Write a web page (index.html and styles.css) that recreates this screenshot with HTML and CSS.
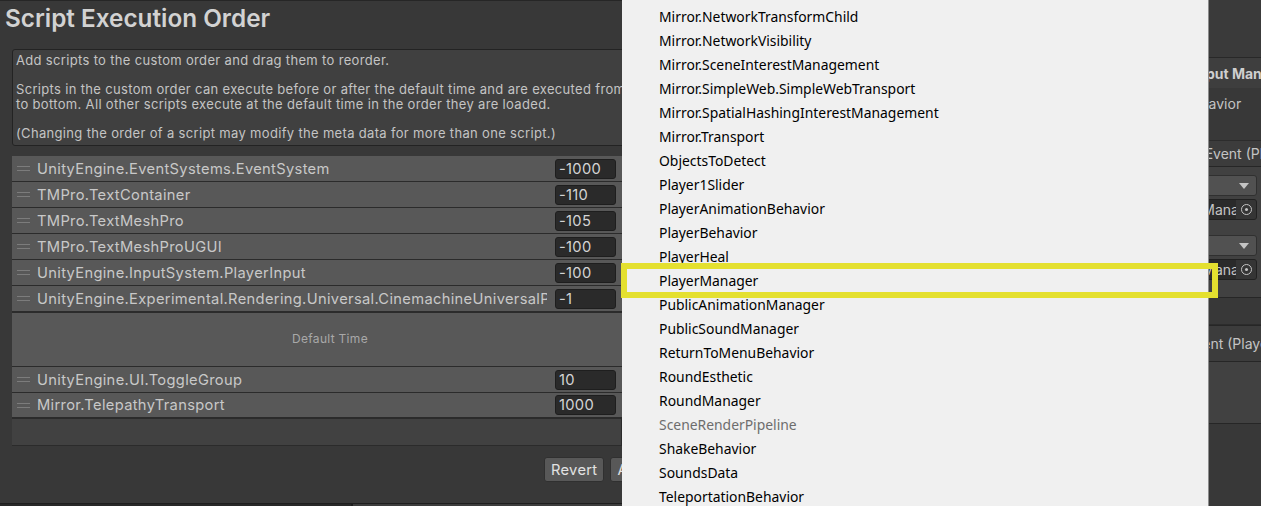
FILE: index.html
```html
<!DOCTYPE html>
<html>
<head>
<meta charset="utf-8">
<link rel="stylesheet" href="styles.css">
</head>
<body>
<div class="app">
  <div class="editor">
    <div class="editor-main">
      <h1 class="title">Script Execution Order</h1>
      <div class="help">
        <div class="hl">Add scripts to the custom order and drag them to reorder.</div>
        <div class="hl">&nbsp;</div>
        <div class="hl">Scripts in the custom order can execute before or after the default time and are executed from</div>
        <div class="hl">to bottom. All other scripts execute at the default time in the order they are loaded.</div>
        <div class="hl">&nbsp;</div>
        <div class="hl">(Changing the order of a script may modify the meta data for more than one script.)</div>
      </div>
      <div class="list">
        <div class="row"><span class="handle"></span><span class="name">UnityEngine.EventSystems.EventSystem</span><span class="num">-1000</span></div>
        <div class="row"><span class="handle"></span><span class="name">TMPro.TextContainer</span><span class="num">-110</span></div>
        <div class="row"><span class="handle"></span><span class="name">TMPro.TextMeshPro</span><span class="num">-105</span></div>
        <div class="row"><span class="handle"></span><span class="name">TMPro.TextMeshProUGUI</span><span class="num">-100</span></div>
        <div class="row"><span class="handle"></span><span class="name">UnityEngine.InputSystem.PlayerInput</span><span class="num">-100</span></div>
        <div class="row"><span class="handle"></span><span class="name">UnityEngine.Experimental.Rendering.Universal.CinemachineUniversalPixelPerfect</span><span class="num">-1</span></div>
        <div class="default">Default Time</div>
        <div class="row"><span class="handle"></span><span class="name">UnityEngine.UI.ToggleGroup</span><span class="num">10</span></div>
        <div class="row last"><span class="handle"></span><span class="name">Mirror.TelepathyTransport</span><span class="num">1000</span></div>
        <div class="list-foot"></div>
      </div>
      <div class="actions">
        <button class="btn">Revert</button>
        <button class="btn">Apply</button>
      </div>
    </div>
    <div class="dock-strip"><span class="dock-a"></span><span class="dock-b"></span></div>
  </div>

  <div class="inspector">
    <div class="i-toolbar"></div>
    <div class="i-header"><span class="i-title">Player Input Manager</span></div>
    <div class="i-prop"><span class="i-label">Join Behavior</span></div>
    <div class="i-space"></div>
    <div class="ev-head"><span class="ev-label ev1">Player Joined Event (PlayerInput)</span></div>
    <div class="ev-box">
      <div class="ev-line"><span class="dropdown"><span class="dd-text">Runtime Only</span><span class="caret"></span></span></div>
      <div class="ev-line"><span class="objfield"><span class="of-text">PlayerManager (PlayerManager)</span><span class="picker"><span class="pick-ring"></span></span></span></div>
      <div class="ev-line sep"><span class="dropdown"><span class="dd-text">Runtime Only</span><span class="caret"></span></span></div>
      <div class="ev-line"><span class="objfield"><span class="of-text">PlayerManager (PlayerManager)</span><span class="picker"><span class="pick-ring"></span></span></span></div>
    </div>
    <div class="ev-foot"></div>
    <div class="ev-head two"><span class="ev-label ev2">Player Left Event (PlayerInput)</span></div>
    <div class="ev-box empty"></div>
    <div class="i-rest"></div>
  </div>

  <div class="menu">
    <div class="mi">Mirror.NetworkTransformChild</div>
    <div class="mi">Mirror.NetworkVisibility</div>
    <div class="mi">Mirror.SceneInterestManagement</div>
    <div class="mi">Mirror.SimpleWeb.SimpleWebTransport</div>
    <div class="mi">Mirror.SpatialHashingInterestManagement</div>
    <div class="mi">Mirror.Transport</div>
    <div class="mi">ObjectsToDetect</div>
    <div class="mi">Player1Slider</div>
    <div class="mi">PlayerAnimationBehavior</div>
    <div class="mi">PlayerBehavior</div>
    <div class="mi">PlayerHeal</div>
    <div class="mi">PlayerManager</div>
    <div class="mi">PublicAnimationManager</div>
    <div class="mi">PublicSoundManager</div>
    <div class="mi">ReturnToMenuBehavior</div>
    <div class="mi">RoundEsthetic</div>
    <div class="mi">RoundManager</div>
    <div class="mi disabled">SceneRenderPipeline</div>
    <div class="mi">ShakeBehavior</div>
    <div class="mi">SoundsData</div>
    <div class="mi">TeleportationBehavior</div>
    <div class="mi">TextureScroller</div>
  </div>
  <div class="mark"></div>
</div>
</body>
</html>
```

FILE: styles.css
```css
* { box-sizing: border-box; }
html, body { margin: 0; padding: 0; }
body {
  width: 1261px;
  height: 506px;
  overflow: hidden;
  background: #383838;
  font-family: Inter, "Liberation Sans", sans-serif;
}
.app {
  position: relative;
  display: flex;
  width: 1261px;
  height: 506px;
  overflow: hidden;
}

/* ---------- editor window ---------- */
.editor {
  flex: 0 0 680px;
  width: 680px;
  min-width: 0;
  overflow: hidden;
  display: flex;
  flex-direction: column;
  background: #383838;
  border-top: 1px solid #262626;
}
.editor-main {
  flex: 1;
  min-height: 0;
  display: flex;
  flex-direction: column;
  overflow: hidden;
}
.title {
  margin: 3px 0 0 5px;
  height: 30px;
  font-size: 24.3px;
  line-height: 28px;
  font-weight: 600;
  color: #d2d2d2;
}
.help {
  margin: 15px 40px 0 12px;
  height: 97px;
  padding: 3px 3px 0 3px;
  background: #404040;
  border: 1px solid #232323;
  border-radius: 3px;
  color: #c4c4c4;
  font-size: 13px;
  white-space: nowrap;
  overflow: hidden;
}
.hl { height: 14.6px; line-height: 14.6px; letter-spacing: 0.33px; }

.list {
  margin: 10px 58px 0 12px;
  display: flex;
  flex-direction: column;
}
.row {
  display: flex;
  align-items: center;
  height: 26px;
  background: #585858;
  border-bottom: 1px solid #2b2b2b;
  padding-right: 6px;
}
.row.last { border-bottom: 2px solid #2b2b2b; }
.handle {
  flex: 0 0 13px;
  height: 5px;
  margin: 0 7px 0 5px;
  border-top: 1px solid #7c7c7c;
  border-bottom: 1px solid #7c7c7c;
}
.name {
  flex: 1;
  min-width: 0;
  overflow: hidden;
  white-space: nowrap;
  color: #c8c8c8;
  font-size: 14.7px;
  letter-spacing: 0.33px;
  margin-right: 8px;
}
.num {
  flex: 0 0 61px;
  height: 20px;
  line-height: 18px;
  padding-left: 3px;
  background: #2a2a2a;
  border: 1px solid #1e1e1e;
  border-radius: 3px;
  color: #d4d4d4;
  font-size: 14.7px;
  letter-spacing: 0.3px;
}
.default {
  height: 55px;
  line-height: 52px;
  border-top: 1px solid #2b2b2b;
  border-bottom: 1px solid #2b2b2b;
  background: #585858;
  text-align: center;
  color: #a8a8a8;
  font-size: 12px;
  letter-spacing: 0.3px;
  padding-left: 26px;
}
.list-foot {
  height: 27px;
  background: #414141;
  border-right: 1px solid #2b2b2b;
  border-bottom: 1px solid #2b2b2b;
}
.actions {
  display: flex;
  gap: 6px;
  margin: 11px 0 0 544px;
}
.btn {
  height: 25px;
  padding: 0 6px;
  background: #585858;
  border: 1px solid #303030;
  border-radius: 3px;
  color: #e2e2e2;
  font-family: Inter, "Liberation Sans", sans-serif;
  font-size: 14.7px;
  letter-spacing: 0.3px;
  line-height: 22px;
}
.dock-strip {
  flex: 0 0 3px;
  display: flex;
  border-top: 1px solid #1e1e1e;
}
.dock-a { flex: 0 0 353px; background: #282828; border-right: 2px solid #1e1e1e; }
.dock-b { flex: 1; background: #3c3c3c; }

/* ---------- inspector behind the menu ---------- */
.inspector {
  flex: 1;
  min-width: 0;
  display: flex;
  flex-direction: column;
  background: #383838;
  color: #c4c4c4;
  font-size: 14px;
  white-space: nowrap;
  overflow: hidden;
}
.i-toolbar { flex: 0 0 58px; background: #3a3a3a; border-bottom: 1px solid #282828; }
.i-header {
  flex: 0 0 30px;
  display: flex;
  align-items: center;
  background: #3e3e3e;
  padding-left: 467px;
}
.i-title { font-weight: 700; color: #cfcfcf; }
.i-prop {
  flex: 0 0 30px;
  display: flex;
  align-items: center;
  padding-left: 471px;
}
.i-space { flex: 0 0 23px; border-bottom: 1px solid #2c2c2c; }
.ev-head {
  flex: 0 0 26px;
  display: flex;
  align-items: center;
  background: #3c3c3c;
  border-bottom: 1px solid #262626;
}
.ev1 { padding-left: 431px; }
.ev-head.two { flex: 0 0 37px; border-top: 1px solid #262626; }
.ev2 { padding-left: 432px; }
.ev-box {
  flex: 0 0 131px;
  background: #414141;
  display: flex;
  flex-direction: column;
  padding-top: 8px;
  border-bottom: 1px solid #262626;
}
.ev-box.empty { flex: 0 0 62px; }
.ev-line {
  display: flex;
  justify-content: flex-end;
  padding-right: 4px;
  margin-bottom: 3px;
}
.ev-line.sep { margin-top: 12px; }
.dropdown {
  display: flex;
  align-items: center;
  justify-content: space-between;
  width: 140px;
  height: 21px;
  padding: 0 7px 0 6px;
  background: #515151;
  border: 1px solid #303030;
  border-radius: 3px;
  color: #c4c4c4;
  font-size: 13px;
}
.dd-text { overflow: hidden; }
.caret {
  width: 0; height: 0;
  border-left: 5px solid transparent;
  border-right: 5px solid transparent;
  border-top: 6px solid #c4c4c4;
}
.objfield {
  display: flex;
  width: 101px;
  height: 21px;
  background: #2a2a2a;
  border: 1px solid #212121;
  border-radius: 3px;
  overflow: hidden;
}
.of-text {
  flex: 1;
  min-width: 0;
  overflow: hidden;
  padding-left: 4px;
  line-height: 19px;
  color: #c4c4c4;
}
.picker {
  flex: 0 0 20px;
  display: flex;
  align-items: center;
  justify-content: center;
  background: #353535;
}
.pick-ring {
  width: 11px; height: 11px;
  border: 1.5px solid #c4c4c4;
  border-radius: 50%;
  display: flex;
  align-items: center;
  justify-content: center;
}
.pick-ring::after {
  content: "";
  width: 3px; height: 3px;
  border-radius: 50%;
  background: #c4c4c4;
}
.ev-foot { flex: 0 0 27px; border-bottom: 1px solid #2c2c2c; }
.i-rest { flex: 1; }

/* ---------- dropdown menu overlay ---------- */
.menu {
  position: absolute;
  left: 622px;
  top: 0;
  width: 587px;
  height: 506px;
  background: #f0f0f0;
  border-right: 1px solid #8c8c8c;
  padding: 5px 0 0 37px;
  font-family: "Noto Sans", "Open Sans", sans-serif;
  font-size: 13.9px;
  color: #000;
  overflow: hidden;
}
.mi { height: 24px; line-height: 24px; white-space: nowrap; }
.mi.disabled { color: #6d6d6d; }
.mark {
  position: absolute;
  left: 621px;
  top: 263px;
  width: 597px;
  height: 35px;
  border: 6px solid #e4e02f;
}
```
